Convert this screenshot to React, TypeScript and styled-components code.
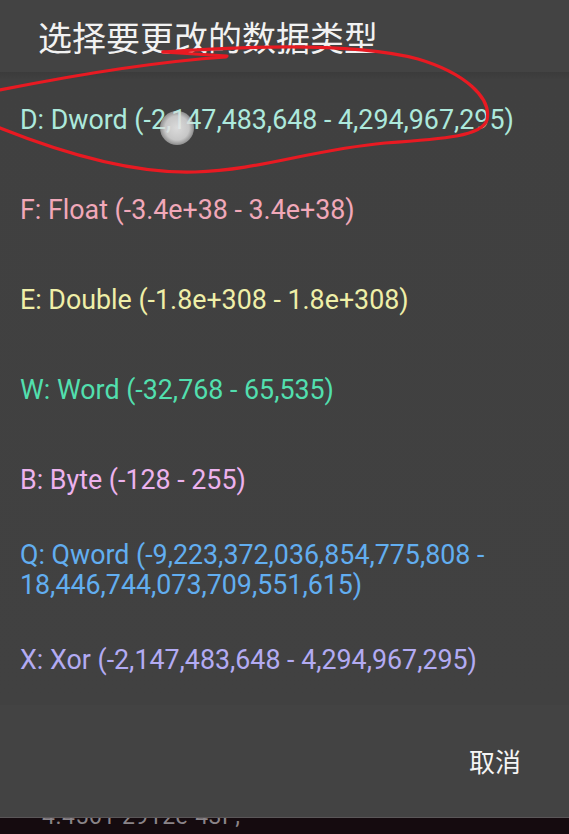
import React from "react";
import styled, { createGlobalStyle } from "styled-components";

const Global = createGlobalStyle`
  html, body { margin: 0; padding: 0; background: #150b0f; }
  body { font-family: Roboto, "Noto Sans", "Noto Sans CJK SC", sans-serif; }
`;

const Screen = styled.div`
  position: relative;
  width: 569px;
  height: 834px;
  display: flex;
  flex-direction: column;
  overflow: hidden;
  background: #150b0f;
`;

const Dialog = styled.div`
  height: 818px;
  flex: none;
  display: flex;
  flex-direction: column;
  background: #424242;
  border-bottom: 1px solid #5a5658;
  box-sizing: border-box;
`;

const Header = styled.div`
  height: 72px;
  flex: none;
  display: flex;
  align-items: center;
  padding-left: 38px;
  background: #434343;
  font-family: "Noto Sans CJK SC", "Noto Sans", sans-serif;
  font-size: 34px;
  color: #f2f2f2;
`;

const List = styled.div`
  display: flex;
  flex-direction: column;
  padding-top: 3px;
  background: linear-gradient(#3b3b3b 0px, #404040 8px, #414141 100%);
`;

const Item = styled.div<{ $c: string }>`
  min-height: 90px;
  box-sizing: border-box;
  padding: 15px 30px 15px 20px;
  display: flex;
  align-items: center;
  font-family: Roboto, "Noto Sans", sans-serif;
  font-size: 26.8px;
  line-height: 30px;
  color: ${(p) => p.$c};
`;

const Footer = styled.div`
  flex: 1;
  display: flex;
  justify-content: flex-end;
  align-items: center;
  padding-right: 48px;
  padding-bottom: 2px;
  background: #434343;
`;

const CancelButton = styled.div`
  font-family: "Noto Sans CJK SC", "Noto Sans", sans-serif;
  font-size: 26px;
  color: #f5f5f5;
`;

const Behind = styled.div`
  flex: 1;
  overflow: hidden;
  padding-left: 42px;
`;

const BehindText = styled.div`
  margin-top: -15px;
  font-family: Roboto, "Noto Sans", sans-serif;
  font-size: 23px;
  line-height: 28px;
  color: #8a8488;
  letter-spacing: 0.5px;
`;

const Overlay = styled.svg`
  position: absolute;
  left: 0;
  top: 0;
  pointer-events: none;
`;

const Touch = styled.div`
  position: absolute;
  left: 160px;
  top: 111px;
  width: 34px;
  height: 34px;
  border-radius: 50%;
  background: radial-gradient(circle, rgba(232,232,232,0.92) 0%, rgba(222,222,222,0.85) 50%, rgba(210,210,210,0.35) 80%, rgba(200,200,200,0) 100%);
`;

const items = [
  { c: "#ade9dc", t: "D: Dword (-2,147,483,648 - 4,294,967,295)" },
  { c: "#f1a8b9", t: "F: Float (-3.4e+38 - 3.4e+38)" },
  { c: "#efefa8", t: "E: Double (-1.8e+308 - 1.8e+308)" },
  { c: "#52dfae", t: "W: Word (-32,768 - 65,535)" },
  { c: "#ecb2ee", t: "B: Byte (-128 - 255)" },
  { c: "#62aef0", t: "Q: Qword (-9,223,372,036,854,775,808 - 18,446,744,073,709,551,615)" },
  { c: "#b3abf3", t: "X: Xor (-2,147,483,648 - 4,294,967,295)" },
];

export default function App() {
  return (
    <>
      <Global />
      <Screen>
        <Dialog>
          <Header>选择要更改的数据类型</Header>
          <List>
            {items.map((it) => (
              <Item key={it.t} $c={it.c}>{it.t}</Item>
            ))}
          </List>
          <Footer>
            <CancelButton>取消</CancelButton>
          </Footer>
        </Dialog>
        <Behind>
          <BehindText>4.4561 2912e-43F;</BehindText>
        </Behind>
        <Touch />
        <Overlay width="569" height="834" viewBox="0 0 569 834">
          <g fill="none" stroke="#e81a22" strokeWidth="3.2" strokeLinecap="round" strokeLinejoin="round">
            <path d="M0 90 C60 78 150 62 226 57" />
            <path d="M163 52 L227 56" />
            <path d="M163 52 C260 45 360 44 418 59 C465 73 492 98 487 120 C482 136 445 139 385 143 C310 150 260 170 195 172 C130 174 60 152 0 128" />
          </g>
        </Overlay>
      </Screen>
    </>
  );
}
